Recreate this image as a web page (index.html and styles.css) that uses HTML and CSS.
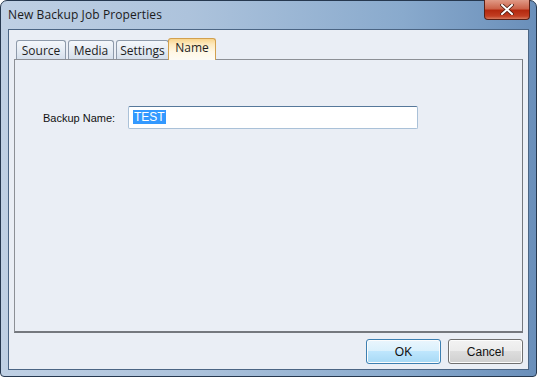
FILE: index.html
```html
<!DOCTYPE html>
<html lang="en">
<head>
    <meta charset="UTF-8">
    <title>New Backup Job Properties</title>
    <link rel="stylesheet" href="styles.css">
</head>
<body>
    <div class="window">
        <div class="titlebar">
            <span class="title">New Backup Job Properties</span>
            <button class="close" type="button" aria-label="Close">
                <svg width="14" height="11" viewBox="0 0 14 11">
                    <path d="M2 1 L12 10 M12 1 L2 10" stroke="#4a1a10" stroke-width="3.6" stroke-linecap="square"/>
                    <path d="M2 1 L12 10 M12 1 L2 10" stroke="#ffffff" stroke-width="2" stroke-linecap="square"/>
                </svg>
            </button>
        </div>
        <div class="client">
            <div class="tabs">
                <div class="tab tab-source">Source</div>
                <div class="tab tab-media">Media</div>
                <div class="tab tab-settings">Settings</div>
                <div class="tab tab-name active">Name</div>
            </div>
            <div class="panel">
                <div class="field">
                    <label for="backupName">Backup Name:</label>
                    <div class="input" id="backupName"><span class="sel">TEST</span></div>
                </div>
            </div>
            <div class="footer">
                <button class="btn" type="button">OK</button>
                <button class="btn" type="button">Cancel</button>
            </div>
        </div>
    </div>
</body>
</html>
```

FILE: styles.css
```css
html, body { margin: 0; padding: 0; }
body { width: 537px; height: 377px; overflow: hidden; font-family: "Open Sans", "Noto Sans", sans-serif; }

.window {
    box-sizing: border-box;
    width: 537px; height: 377px;
    border: 1px solid #26384f;
    border-radius: 7px 7px 4px 4px;
    background: linear-gradient(to right, #bfd0e4 0%, #adc3dc 35%, #89aacd 75%, #6a8fba 100%);
    display: flex; flex-direction: column;
}

.titlebar { height: 28px; display: flex; align-items: flex-start; position: relative; }
.title { font-size: 12px; color: #1b1b1b; margin: 5px 0 0 7px; letter-spacing: 0.1px; }
.close {
    position: absolute; right: 6px; top: -1px;
    width: 46px; height: 20px; padding: 0;
    border: 1px solid #5a2016; border-top: none;
    border-radius: 0 0 4px 4px;
    background: linear-gradient(to bottom, #e09a86 0%, #cc634a 45%, #b4290f 55%, #c23e22 85%, #d57a5e 100%);
    display: flex; align-items: center; justify-content: center;
}

.client {
    flex: 1;
    margin: 0 7px 6px 7px;
    border: 1px solid #4b6584;
    background: #eaeef5;
    display: flex; flex-direction: column;
    padding: 7px 5px 0 5px;
}

.tabs { display: flex; align-items: flex-end; padding-left: 2px; height: 22px; }
.tab {
    box-sizing: border-box;
    font-size: 12px; color: #1e1e1e;
    height: 19px; line-height: 19px;
    text-align: center;
    margin-right: 2px;
    border: 1px solid #8e9aaa; border-bottom: none;
    border-radius: 3px 3px 0 0;
    background: linear-gradient(to bottom, #f4f7fb 0%, #e6ecf4 50%, #d5dfeb 100%);
}
.tab-source { width: 50px; }
.tab-media { width: 46px; }
.tab-settings { width: 53px; }
.tab-name { width: 48px; }
.tab.active {
    height: 22px; line-height: 18px;
    margin-left: -3px;
    border-color: #d2a04e;
    background: linear-gradient(to bottom, #f8d48c 0%, #fde9bd 25%, #fff7e4 60%, #fdfbf5 100%);
    position: relative; top: 1px;
}

.panel {
    box-sizing: border-box;
    height: 274px;
    border: 1px solid #8c8f95;
    border-right-color: #75787e; border-bottom: 2px solid #75787e;
    background: #eaeef5;
    padding: 46px 0 0 28px;
}

.field { display: flex; align-items: center; }
.field label { font-family: "Liberation Sans", sans-serif; font-size: 11px; color: #111; width: 85px; }
.input {
    box-sizing: border-box;
    width: 290px; height: 23px;
    border: 1px solid #aac1d8; border-top-color: #56789a;
    border-radius: 2px;
    background: #fff;
    padding: 0 0 1px 4px;
    display: flex; align-items: center;
}
.sel { font-family: "Liberation Sans", sans-serif; font-size: 12px; line-height: 14px; background: #3399ff; color: #fff; padding: 0 1px; }

.footer { display: flex; justify-content: flex-end; gap: 7px; padding: 6px 0 0 0; }
.btn {
    width: 75px; height: 25px;
    font-family: "Liberation Sans", sans-serif; font-size: 12px; color: #111;
    border: 1px solid #707070; border-radius: 3px;
    background: linear-gradient(to bottom, #f2f2f2 0%, #ebebeb 49%, #dddddd 50%, #cfcfcf 100%);
    box-shadow: inset 0 0 0 1px #fcfcfc;
}
.btn:first-child {
    border-color: #3c7fb1;
    background: linear-gradient(to bottom, #eaf6fd 0%, #d9f0fc 49%, #bee6fd 50%, #a7d9f5 100%);
}
```
